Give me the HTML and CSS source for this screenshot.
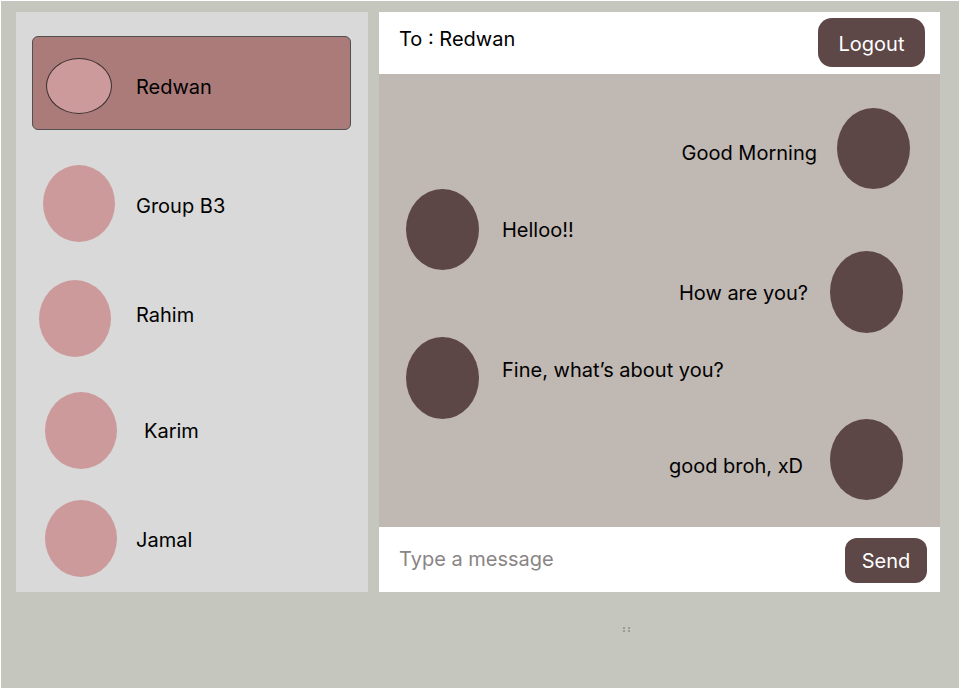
FILE: index.html
```html
<!DOCTYPE html>
<html>
<head>
<meta charset="utf-8">
<link rel="stylesheet" href="styles.css">
</head>
<body>
<div class="frame">
  <div class="main">
    <aside class="sidebar">
      <div class="active">
        <div class="active-avatar"></div>
        <span class="name">Redwan</span>
      </div>
      <div class="contact c-group">
        <div class="cell"><div class="avatar"></div></div>
        <span class="name">Group B3</span>
      </div>
      <div class="contact c-rahim">
        <div class="cell"><div class="avatar"></div></div>
        <span class="name">Rahim</span>
      </div>
      <div class="contact c-karim">
        <div class="cell"><div class="avatar"></div></div>
        <span class="name">Karim</span>
      </div>
      <div class="contact c-jamal">
        <div class="cell"><div class="avatar"></div></div>
        <span class="name">Jamal</span>
      </div>
    </aside>
    <section class="chat">
      <header class="chat-header">
        <span class="to">To : Redwan</span>
        <button class="btn logout">Logout</button>
      </header>
      <div class="messages">
        <div class="msg out m1"><span class="text">Good Morning</span><div class="bubble"></div></div>
        <div class="msg in m2"><div class="bubble"></div><span class="text">Helloo!!</span></div>
        <div class="msg out m3"><span class="text">How are you?</span><div class="bubble"></div></div>
        <div class="msg in m4"><div class="bubble"></div><span class="text">Fine, what’s about you?</span></div>
        <div class="msg out m5"><span class="text">good broh, xD</span><div class="bubble"></div></div>
      </div>
      <div class="composer">
        <span class="placeholder">Type a message</span>
        <button class="btn send">Send</button>
      </div>
    </section>
  </div>
  <div class="handle"><i></i><i></i><i></i><i></i></div>
</div>
</body>
</html>
```
FILE: styles.css
```css
* { box-sizing: border-box; }
html, body { margin: 0; padding: 0; background: #ffffff; }
body { font-family: Inter, "Noto Sans", sans-serif; font-size: 20px; color: #000; }

.frame {
  margin: 1px 0 0 1px;
  width: 958px;
  height: 687px;
  background: #c5c6bd;
  padding: 11px 0 0 15px;
}
.main { display: flex; gap: 11px; height: 580px; }

.sidebar {
  width: 352px;
  background: #d9d9d9;
  padding-top: 24px;
}
.name { line-height: 24px; }
.active {
  margin-left: 16px;
  width: 319px;
  height: 94px;
  background: #ab7b7a;
  border: 1px solid #505050;
  border-radius: 6px;
  display: flex;
  align-items: center;
}
.active-avatar {
  width: 66px;
  height: 56px;
  margin-left: 13px;
  margin-right: 24px;
  border-radius: 50%;
  background: #cc9a9a;
  border: 1px solid #3a3030;
  margin-top: 5px;
}
.active .name { margin-top: 8px; }

.contact { display: flex; align-items: center; height: 77px; }
.cell { width: 120px; flex: none; }
.avatar { width: 72px; height: 77px; border-radius: 50%; background: #cc9a9a; }
.c-group { margin-top: 35px; }
.c-group .avatar { margin-left: 27px; }
.c-group .name { padding-top: 4px; }
.c-rahim { margin-top: 38px; }
.c-rahim .avatar { margin-left: 23px; }
.c-rahim .name { padding-bottom: 7px; }
.c-karim { margin-top: 35px; }
.c-karim .avatar { margin-left: 29px; }
.c-karim .name { padding-left: 8px; }
.c-jamal { margin-top: 31px; }
.c-jamal .avatar { margin-left: 29px; }
.c-jamal .name { padding-top: 3px; }

.chat { width: 561px; display: flex; flex-direction: column; }
.chat-header {
  height: 62px;
  background: #ffffff;
  display: flex;
  justify-content: space-between;
  align-items: flex-start;
  padding: 0 15px 0 20px;
}
.to { margin-top: 15px; line-height: 24px; }
.btn {
  font-family: Inter, "Noto Sans", sans-serif;
  font-size: 20px;
  color: #ffffff;
  background: #5e4747;
  border: none;
  padding: 0;
  cursor: pointer;
}
.logout { margin-top: 6px; width: 107px; height: 49px; border-radius: 14px; padding-top: 2px; }

.messages {
  flex: 1;
  background: #c0b8b3;
  display: flex;
  flex-direction: column;
}
.msg { display: flex; align-items: center; }
.msg.out { justify-content: flex-end; }
.bubble { width: 73px; height: 81px; border-radius: 50%; background: #5d4646; flex: none; }
.text { line-height: 24px; }
.msg.out .text { margin-right: 20px; }
.msg.in { padding-left: 27px; }
.msg.in .text { margin-left: 23px; }

.m1 { margin-top: 34px; padding-right: 30px; }
.m1 .text { padding-top: 9px; }
.m2 { margin-top: 0; }
.m2 .text { padding-top: 1px; }
.m3 { margin-top: -19px; padding-right: 37px; }
.m3 .bubble { height: 82px; }
.m3 .text { margin-right: 22px !important; padding-top: 2px; }
.m4 { margin-top: 4px; }
.m4 .bubble { height: 82px; }
.m4 .text { padding-bottom: 16px; }
.m5 { margin-top: 0; padding-right: 37px; }
.m5 .text { margin-right: 27px !important; padding-top: 13px; }

.composer {
  height: 65px;
  background: #ffffff;
  display: flex;
  align-items: center;
  justify-content: space-between;
  padding: 0 13px 0 20px;
}
.placeholder { color: #8a8585; line-height: 24px; margin-bottom: 1px; }
.send { width: 82px; height: 45px; border-radius: 12px; margin-top: 2px; padding-top: 1px; }

.handle {
  margin: 35px 0 0 607px;
  width: 8px;
  display: grid;
  grid-template-columns: 2px 2px;
  column-gap: 3px;
  row-gap: 1px;
}
.handle i { display: block; width: 2px; height: 2px; background: #9a9a96; }
```
